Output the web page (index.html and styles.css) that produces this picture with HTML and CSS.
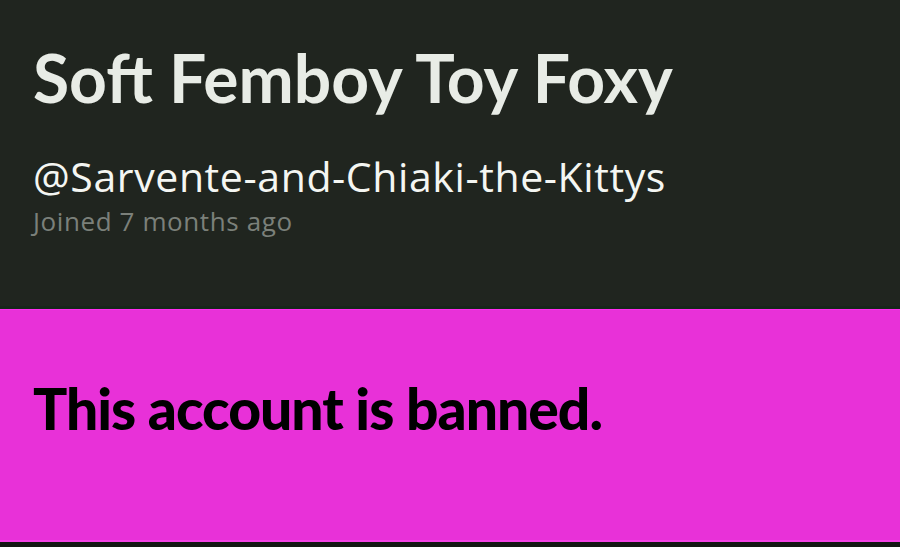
FILE: index.html
```html
<!DOCTYPE html>
<html>
<head>
<meta charset="utf-8">
<link rel="stylesheet" href="styles.css">
</head>
<body>
<header class="profile">
  <h1 class="name">Soft Femboy Toy Foxy</h1>
  <div class="handle">@Sarvente-and-Chiaki-the-Kittys</div>
  <div class="joined">Joined 7 months ago</div>
</header>
<section class="banned">
  <h2 class="banned-text">This account is banned.</h2>
</section>
<div class="footer-strip"></div>
</body>
</html>
```
FILE: styles.css
```css
html, body {
  margin: 0;
  padding: 0;
  height: 547px;
  overflow: hidden;
  background: #20251f;
}
body {
  display: flex;
  flex-direction: column;
  font-family: Lato, "Noto Sans", sans-serif;
}
.profile {
  height: 309px;
  flex-shrink: 0;
  box-sizing: border-box;
  padding: 33px 33px 0;
  border-bottom: 3px solid #17261a;
}
.name {
  margin: 0;
  font-family: Lato, sans-serif;
  font-weight: 700;
  font-size: 66px;
  line-height: 90px;
  color: #e8ece6;
}
.handle {
  margin-top: 29px;
  font-family: "Open Sans", sans-serif;
  font-weight: 400;
  font-size: 41px;
  line-height: 48px;
  letter-spacing: 0.6px;
  color: #f4f6f2;
}
.joined {
  margin-top: 6px;
  font-family: "Open Sans", sans-serif;
  font-size: 26px;
  line-height: 30px;
  letter-spacing: 0.6px;
  color: #7b807a;
}
.banned {
  flex-shrink: 0;
  background: #e831d8;
  border-top: 1px solid #ff2ef0;
  border-bottom: 2px solid #f540e6;
  height: 233px;
  box-sizing: border-box;
  padding: 66px 33px 0;
}
.banned-text {
  margin: 0;
  font-family: Lato, sans-serif;
  font-weight: 900;
  font-size: 57px;
  line-height: 64px;
  letter-spacing: -1px;
  color: #000;
}
.footer-strip {
  flex: 1;
  background: #141814;
}
```
